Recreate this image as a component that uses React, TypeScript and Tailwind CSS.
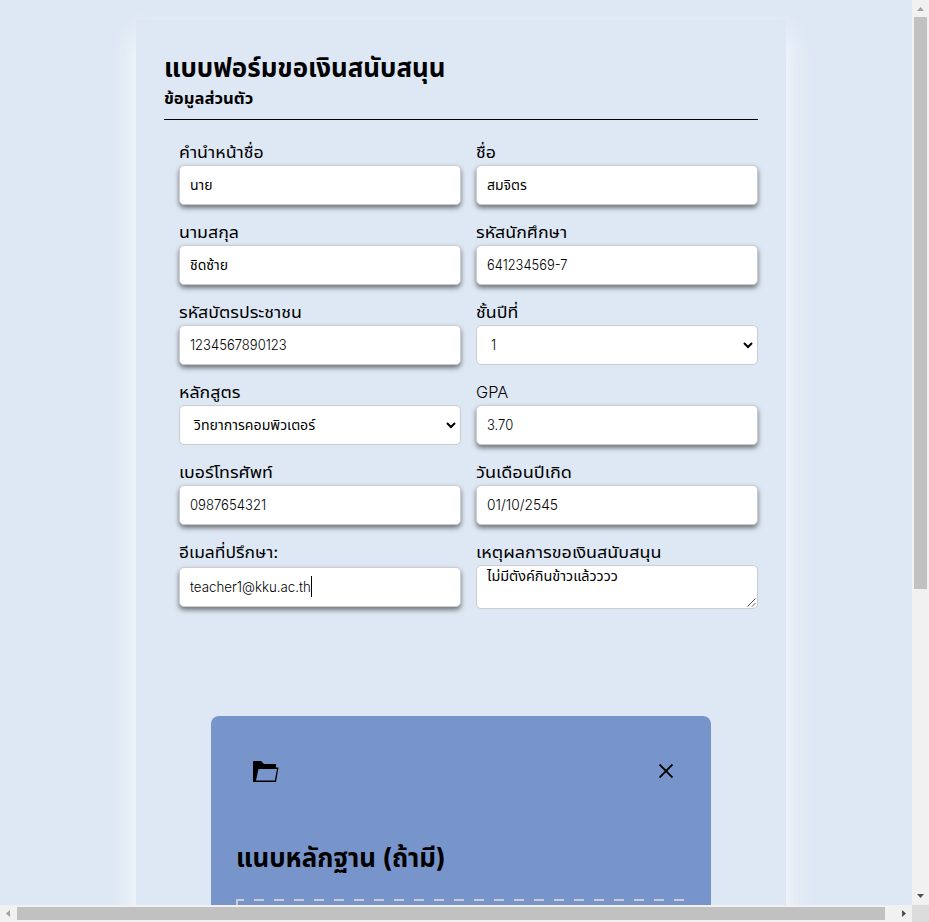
import type { ReactNode } from 'react';

const control =
  'flex h-10 w-[282px] shrink-0 items-center rounded-[5px] border border-[#ccc] bg-white text-[14px]';
const raised = 'px-2.5 pb-0.5 shadow-[0_3px_5px_rgba(0,0,0,0.5)]';

function T({ children, className = '' }: { children: ReactNode; className?: string }) {
  return <span className={`inline-block origin-left whitespace-nowrap ${className}`}>{children}</span>;
}

function Field({ label, stretch = 'scale-x-[1.11]', children }: { label: string; stretch?: string; children: ReactNode }) {
  return (
    <div className="flex h-20 w-[282px] flex-col">
      <div className="flex h-[25px] shrink-0 items-center text-[16px] leading-[25px]">
        <T className={stretch}>{label}</T>
      </div>
      {children}
    </div>
  );
}

function Input({ children }: { children: ReactNode }) {
  return <div className={`${control} ${raised}`}>{children}</div>;
}

function Select({ children }: { children: ReactNode }) {
  return (
    <div className={`${control} justify-between pl-3.5 pr-1`}>
      <div className="pb-0.5">{children}</div>
      <svg width="10" height="8" viewBox="0 0 10 8" fill="none" stroke="black" strokeWidth="2">
        <path d="M1 2 L5 6 L9 2" />
      </svg>
    </div>
  );
}

export default function App() {
  return (
    <div className="flex h-[922px] w-[929px] flex-col overflow-hidden bg-[#dee8f4] font-['Inter','Noto_Sans_Thai','Noto_Sans','Open_Sans',sans-serif] text-black">
      <div className="flex h-[905px]">
        <main className="h-[905px] w-[912px] overflow-hidden pl-[136px] pt-5">
          <section className="h-[1300px] w-[650px] bg-[#dee8f4] px-7 pt-7 shadow-[0_15px_25px_rgba(255,255,255,0.95)]">
            <h1 className="flex h-[39px] items-center text-[26px] font-bold leading-[39px]">
              <T className="scale-x-[0.996]">แบบฟอร์มขอเงินสนับสนุน</T>
            </h1>
            <div className="flex h-[33px] items-start border-b border-black text-[16px] font-bold leading-[22px]">
              <T className="scale-x-[1.04]">ข้อมูลส่วนตัว</T>
            </div>
            <div className="ml-[15px] mt-5 grid grid-cols-2 gap-x-[15px]">
              <Field label="คำนำหน้าชื่อ"><Input><T>นาย</T></Input></Field>
              <Field label="ชื่อ"><Input><T>สมจิตร</T></Input></Field>
              <Field label="นามสกุล"><Input><T>ชิดซ้าย</T></Input></Field>
              <Field label="รหัสนักศึกษา"><Input><T className="scale-x-[0.92] font-light">641234569-7</T></Input></Field>
              <Field label="รหัสบัตรประชาชน"><Input><T className="scale-x-[0.93] font-light">1234567890123</T></Input></Field>
              <Field label="ชั้นปีที่"><Select><T className="scale-x-[0.93] font-light">1</T></Select></Field>
              <Field label="หลักสูตร"><Select><T className="scale-x-[1.01]">วิทยาการคอมพิวเตอร์</T></Select></Field>
              <Field label="GPA" stretch="scale-x-[1.02] font-light"><Input><T className="scale-x-[0.93] font-light">3.70</T></Input></Field>
              <Field label="เบอร์โทรศัพท์"><Input><T className="scale-x-[0.935] font-light">0987654321</T></Input></Field>
              <Field label="วันเดือนปีเกิด" stretch="scale-x-[1.13]"><Input><T className="scale-x-[0.985] font-light">01/10/2545</T></Input></Field>
              <Field label="อีเมลที่ปรึกษา:" stretch="scale-x-[1.09]">
                <div className={`${control} ${raised} mt-0.5`}>
                  <T className="w-[121px] scale-x-[0.95] font-light">teacher1@kku.ac.th</T>
                  <span className="h-[21px] w-px bg-black" />
                </div>
              </Field>
              <Field label="เหตุผลการขอเงินสนับสนุน" stretch="scale-x-[1.12]">
                <div className="flex h-11 w-[282px] shrink-0 justify-between rounded-[5px] border border-[#ccc] bg-white pl-2.5 text-[14px] leading-[19px]">
                  <T className="scale-x-[1.03]">ไม่มีตังค์กินข้าวแล้วววว</T>
                  <svg className="mb-px mr-px self-end" width="9" height="9" viewBox="0 0 9 9" stroke="#555" strokeWidth="1">
                    <path d="M0.5 8.5 L8.5 0.5 M5 8.5 L8.5 5" />
                  </svg>
                </div>
              </Field>
            </div>
            <div className="ml-[47px] mt-24 h-[500px] w-[500px] rounded-lg bg-[#7895cb] px-[25px] pt-[43px]">
              <div className="flex h-6 items-center justify-between pl-[17px] pr-[13px]">
                <svg width="26" height="22" viewBox="0 0 26 22">
                  <path fill="black" fillRule="evenodd" d="M0 1.5 L0.5 1 H8 L11 4 H23 V7.5 H25.5 L23 22 H0 Z M5.5 9 L3 20.5 H21.8 L24 9 Z" />
                </svg>
                <svg width="14" height="14" viewBox="0 0 14 14" stroke="black" strokeWidth="1.9">
                  <path d="M0.5 0.5 L13.5 13.5 M13.5 0.5 L0.5 13.5" />
                </svg>
              </div>
              <h2 className="mt-[54px] flex h-10 items-center text-[26px] font-bold leading-[39px]">
                <T className="scale-x-[0.995]">แนบหลักฐาน (ถ้ามี)</T>
              </h2>
              <svg className="mt-[22px]" width="450" height="200" fill="none" stroke="#c8cdd5" strokeWidth="2">
                <path d="M0 1 H8" />
                <path d="M1 0 V198" strokeDasharray="8 10" />
                <path d="M18 1 H449" strokeDasharray="10 10" />
              </svg>
            </div>
          </section>
        </main>
        <div className="flex w-[17px] flex-col items-center justify-between bg-[#f1f1f1]">
          <div className="flex flex-col items-center">
            <svg width="17" height="17"><path d="M5 11 H12 L8.5 7 Z" fill="#a3a3a3" /></svg>
            <div className="h-[572px] w-[13px] bg-[#c1c1c1]" />
          </div>
          <svg width="17" height="17"><path d="M5 6 H12 L8.5 10 Z" fill="#505050" /></svg>
        </div>
      </div>
      <div className="flex h-[17px] items-center bg-[#f1f1f1]">
        <svg width="17" height="17"><path d="M10 5 V12 L6 8.5 Z" fill="#a3a3a3" /></svg>
        <div className="h-[13px] w-[868px] bg-[#c1c1c1]" />
        <svg className="ml-2.5" width="17" height="17"><path d="M7 5 V12 L11 8.5 Z" fill="#505050" /></svg>
        <div className="h-[17px] w-[17px] bg-[#dcdcdc]" />
      </div>
    </div>
  );
}
